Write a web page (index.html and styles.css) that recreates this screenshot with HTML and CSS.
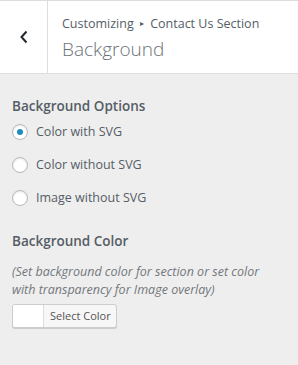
FILE: index.html
```html
<!DOCTYPE html>
<html>
<head>
<meta charset="utf-8">
<link rel="stylesheet" href="styles.css">
</head>
<body>
<div class="header">
  <div class="back">
    <svg width="10" height="14" viewBox="0 0 10 14"><path d="M7.5 1.5 L2.5 7 L7.5 12.5" fill="none" stroke="#23282d" stroke-width="2"/></svg>
  </div>
  <div class="titles">
    <div class="crumb">Customizing <span class="tri">▸</span> Contact Us Section</div>
    <div class="title">Background</div>
  </div>
</div>
<div class="content">
  <div class="section">
    <div class="label">Background Options</div>
    <div class="radios">
      <div class="radio-row"><span class="radio checked"></span><span>Color with SVG</span></div>
      <div class="radio-row"><span class="radio"></span><span>Color without SVG</span></div>
      <div class="radio-row"><span class="radio"></span><span>Image without SVG</span></div>
    </div>
  </div>
  <div class="section second">
    <div class="label">Background Color</div>
    <div class="desc">(Set background color for section or set color with transparency for Image overlay)</div>
    <div class="picker"><span class="swatch"></span><span class="btn-text">Select Color</span></div>
  </div>
</div>
</body>
</html>
```
FILE: styles.css
```css
html, body {
  margin: 0;
  padding: 0;
}
body {
  width: 298px;
  height: 365px;
  background: #eeeeee;
  font-family: "Open Sans", "Noto Sans", sans-serif;
  color: #555d66;
  overflow: hidden;
}
.header {
  display: flex;
  background: #fff;
  border-top: 1px solid #dddddd;
  border-bottom: 1px solid #dddddd;
  height: 72px;
}
.back {
  width: 47px;
  border-right: 1px solid #dddddd;
  display: flex;
  align-items: center;
  justify-content: center;
}
.titles {
  padding: 13px 0 0 14px;
}
.crumb {
  font-size: 12.5px;
  color: #555d66;
  line-height: 18px;
}
.tri {
  font-size: 8px;
  vertical-align: 2px;
  margin: 0 3px;
}
.title {
  font-size: 19px;
  font-weight: 300;
  color: #6b7178;
  line-height: 26px;
  margin-top: 3px;
}
.content {
  padding: 0 12px;
}
.section {
  padding-top: 22px;
}
.section.second {
  padding-top: 23px;
}
.label {
  font-size: 13.5px;
  font-weight: 600;
  line-height: 20px;
}
.radios {
  display: flex;
  flex-direction: column;
  gap: 13px;
  margin-top: 6px;
}
.radio-row {
  display: flex;
  align-items: center;
  gap: 8px;
  font-size: 12.5px;
  line-height: 20px;
  color: #555d66;
}
.radio {
  width: 14px;
  height: 14px;
  border: 1px solid #b4b9be;
  border-radius: 50%;
  background: #fff;
  box-shadow: inset 0 1px 2px rgba(0,0,0,0.1);
  display: flex;
  align-items: center;
  justify-content: center;
}
.radio.checked::after {
  content: "";
  width: 6px;
  height: 6px;
  border-radius: 50%;
  background: #1e8cbe;
}
.desc {
  font-style: italic;
  font-size: 12.5px;
  line-height: 18px;
  margin-top: 12px;
  max-width: 256px;
  color: #72777c;
}
.picker {
  display: inline-flex;
  margin-top: 5px;
  height: 22px;
  border: 1px solid #cccccc;
  border-radius: 3px;
  background: #f7f7f7;
  box-shadow: 0 1px 0 #cccccc;
  overflow: hidden;
}
.swatch {
  width: 30px;
  background: #fff;
  border-right: 1px solid #dddddd;
}
.btn-text {
  font-size: 11px;
  line-height: 22px;
  padding: 0 5px 0 6px;
  color: #555;
}
```
